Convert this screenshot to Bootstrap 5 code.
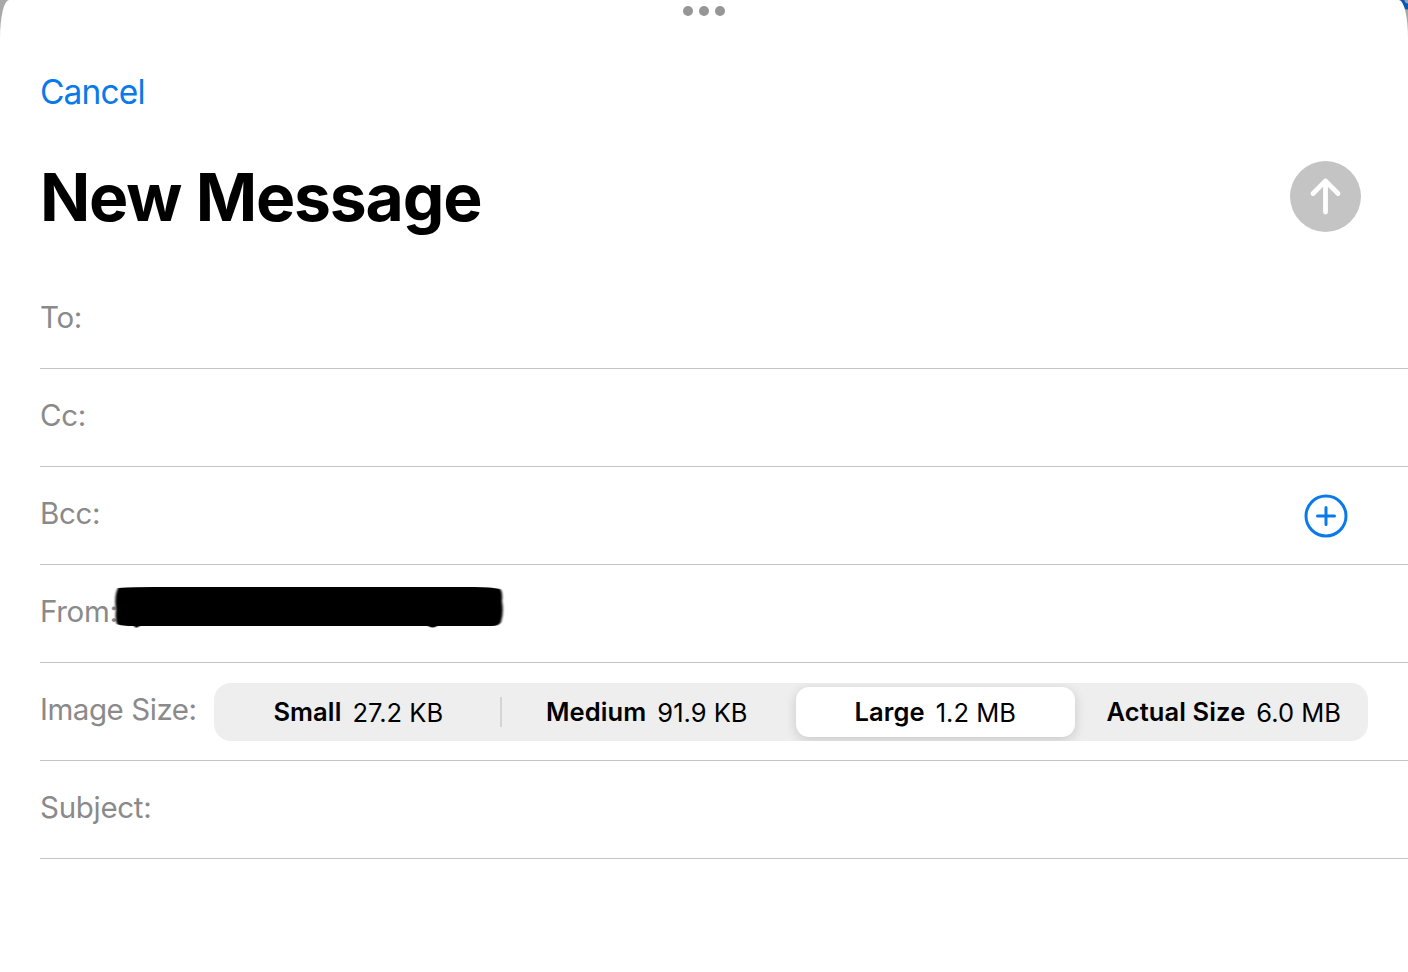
<!DOCTYPE html>
<html lang="en">
<head>
    <meta charset="UTF-8">
    <meta name="viewport" content="width=device-width, initial-scale=1.0">
    <title>New Message</title>

    <!-- Bootstrap CSS -->
    <link href="https://cdn.jsdelivr.net/npm/bootstrap@5.3.0/dist/css/bootstrap.min.css" rel="stylesheet">

    <style>
        body {
            font-family: Inter, "Liberation Sans", sans-serif;
            background:
                radial-gradient(circle at 100% 0, #8fa3bd 3px, #0b57ad 4px, #0b57ad 9px, transparent 10px),
                #a8a8a8;
            color: #000;
        }
        .sheet {
            height: 972px;
            border-radius: 9px 9px 0 0 / 38px 38px 0 0;
            padding-left: 40px;
        }
        .grabber {
            height: 24px;
            gap: 6px;
            margin-left: -40px;
            padding-top: 6px;
        }
        .grabber span {
            width: 10px;
            height: 10px;
            background: #969696;
        }
        .cancel-link {
            font-size: 33.5px;
            line-height: 40px;
            margin-top: 47px;
            color: #0a7aea;
            letter-spacing: -0.85px;
            padding-top: 1px;
            margin-bottom: -1px;
        }
        .title-bar {
            height: 160px;
            padding-right: 47px;
        }
        .title-bar h1 {
            font-size: 66px;
            line-height: 80px;
            margin-top: 46px;
            letter-spacing: -1.2px;
        }
        .send-btn {
            width: 71px;
            height: 71px;
            margin-top: 50px;
        }
        .field-row {
            height: 98px;
            border-bottom: 1px solid #c4c4c6;
            padding-bottom: 5px;
        }
        .field-label {
            font-size: 29.5px;
            line-height: 36px;
            color: #8a8a8a;
            letter-spacing: -0.3px;
            white-space: nowrap;
        }
        .size-label {
            letter-spacing: -0.45px;
        }
        .add-btn {
            width: 44px;
            height: 44px;
            margin-top: 6px;
            margin-right: 60.5px;
        }
        .redacted {
            width: 390px;
            height: 43px;
            margin-left: -4px;
            margin-bottom: 8px;
            overflow: visible;
        }
        .size-picker {
            width: 1154px;
            height: 58px;
            margin-top: 6px;
            margin-right: 40px;
            background: #eee;
            border-radius: 17px;
            overflow: hidden;
        }
        .size-option {
            flex: 1 1 0;
            padding: 4px 5px;
        }
        .size-option > span {
            height: 50px;
            gap: 11px;
            border-radius: 13px;
            font-size: 25.5px;
            white-space: nowrap;
        }
        .size-option.selected > span {
            background: #fff;
            box-shadow: 0 3px 12px rgba(0, 0, 0, .16);
        }
        .size-option b {
            font-weight: 600;
            letter-spacing: 0.1px;
        }
        .size-option b + span {
            padding-top: 2px;
        }
        .size-divider {
            width: 2px;
            height: 30px;
            margin: 0 1px 0 -3px;
            background: #d5d5d6;
        }
    </style>
</head>
<body class="overflow-hidden">
    <main class="sheet bg-white overflow-hidden">
        <div class="grabber d-flex justify-content-center">
            <span class="rounded-circle"></span>
            <span class="rounded-circle"></span>
            <span class="rounded-circle"></span>
        </div>

        <a href="#" class="cancel-link d-table text-decoration-none">Cancel</a>

        <div class="title-bar d-flex justify-content-between align-items-start">
            <h1 class="fw-bold mb-0">New Message</h1>
            <button class="send-btn btn p-0 border-0 d-flex" aria-label="Send">
                <svg width="71" height="71" viewBox="0 0 71 71" fill="none">
                    <circle cx="35.5" cy="35.5" r="35.5" fill="#c4c4c4"/>
                    <path d="M35.5 51V20M23 32.5 35.5 20 48 32.5" stroke="#fff" stroke-width="4.8" stroke-linecap="round" stroke-linejoin="round"/>
                </svg>
            </button>
        </div>

        <!-- Message fields -->
        <div class="field-row d-flex align-items-center">
            <span class="field-label">To:</span>
        </div>
        <div class="field-row d-flex align-items-center">
            <span class="field-label">Cc:</span>
        </div>
        <div class="field-row d-flex align-items-center justify-content-between">
            <span class="field-label">Bcc:</span>
            <button class="add-btn btn p-0 border-0 d-flex" aria-label="Add contact">
                <svg width="44" height="44" viewBox="0 0 44 44" fill="none" stroke="#0a7aea" stroke-width="3" stroke-linecap="round">
                    <circle cx="22" cy="22" r="20"/>
                    <path d="M22 13.5v17M13.5 22h17"/>
                </svg>
            </button>
        </div>
        <div class="field-row d-flex align-items-center">
            <span class="field-label">From:</span>
            <svg class="redacted" viewBox="0 0 390 43">
                <filter id="brush" x="-2%" y="-5%" width="104%" height="110%">
                    <feGaussianBlur stdDeviation="1 0.3"/>
                </filter>
                <path filter="url(#brush)" d="M4 2Q20 1 40 1H360Q378 1 386 3Q389 6 388 15Q390 27 387 36Q385 40 378 40H323Q319 43 314 40H26L22 42L20 40Q7 40 3 38Q1 34 2 24Q0 10 4 2Z"/>
            </svg>
        </div>
        <div class="field-row d-flex align-items-center justify-content-between">
            <span class="field-label size-label">Image Size:</span>
            <div class="size-picker d-flex align-items-center">
                <div class="size-option">
                    <span class="d-flex align-items-center justify-content-center"><b>Small</b> <span>27.2 KB</span></span>
                </div>
                <div class="size-divider"></div>
                <div class="size-option">
                    <span class="d-flex align-items-center justify-content-center"><b>Medium</b> <span>91.9 KB</span></span>
                </div>
                <div class="size-option selected">
                    <span class="d-flex align-items-center justify-content-center"><b>Large</b> <span>1.2 MB</span></span>
                </div>
                <div class="size-option">
                    <span class="d-flex align-items-center justify-content-center"><b>Actual Size</b> <span>6.0 MB</span></span>
                </div>
            </div>
        </div>
        <div class="field-row d-flex align-items-center">
            <span class="field-label">Subject:</span>
        </div>
    </main>

    <script src="https://cdn.jsdelivr.net/npm/bootstrap@5.3.0/dist/js/bootstrap.bundle.min.js"></script>
</body>
</html>
